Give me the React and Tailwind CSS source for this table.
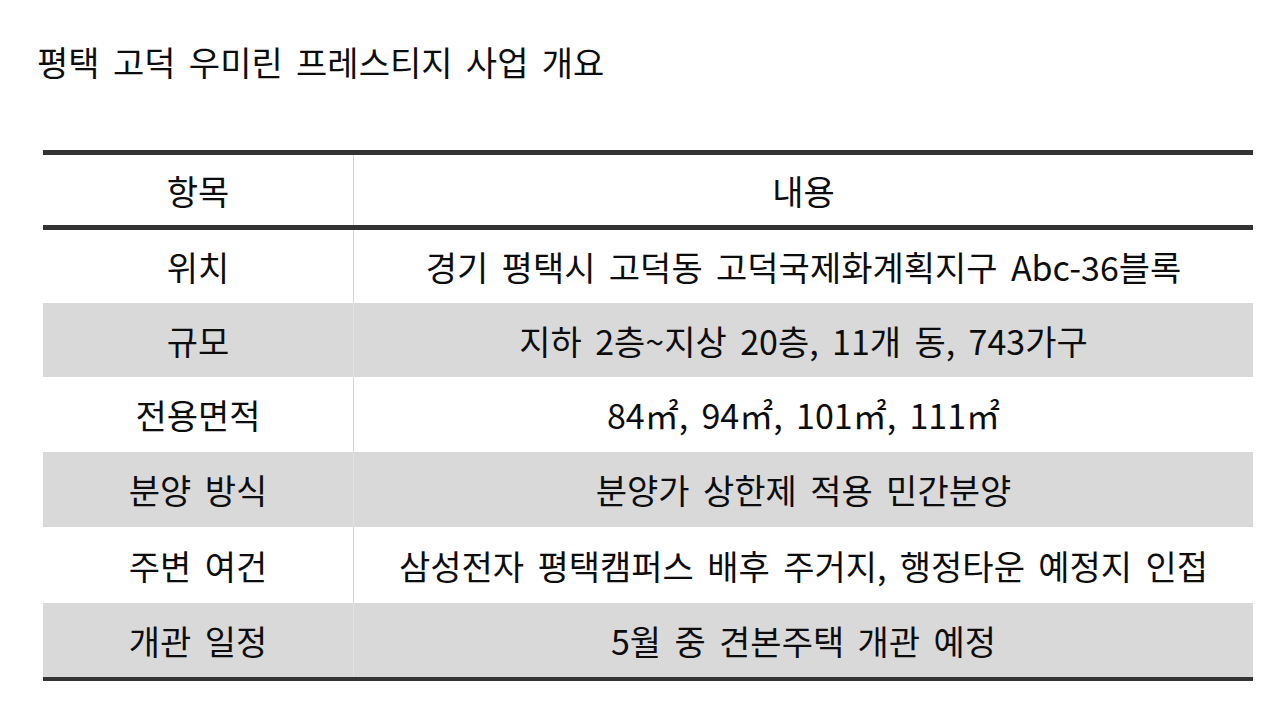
const rows = [
  { label: '위치', value: '경기 평택시 고덕동 고덕국제화계획지구 Abc-36블록', h: 'h-[73px]', gray: false },
  { label: '규모', value: '지하 2층~지상 20층, 11개 동, 743가구', h: 'h-[74px]', gray: true },
  { label: '전용면적', value: '84㎡, 94㎡, 101㎡, 111㎡', h: 'h-[75px]', gray: false },
  { label: '분양 방식', value: '분양가 상한제 적용 민간분양', h: 'h-[75px]', gray: true },
  { label: '주변 여건', value: '삼성전자 평택캠퍼스 배후 주거지, 행정타운 예정지 인접', h: 'h-[76px]', gray: false },
  { label: '개관 일정', value: '5월 중 견본주택 개관 예정', h: 'h-[74px]', gray: true },
];

const App = () => {
  return (
    <div
      className="min-h-[710px] w-[1280px] bg-white text-[#0d0d0d] [word-spacing:0.36em]"
      style={{ fontFamily: '"Noto Sans CJK KR", "Noto Sans", sans-serif' }}
    >
      <h1 className="pl-[37px] pt-[38px] text-[34px] font-normal leading-[48px]">
        평택 고덕 우미린 프레스티지 사업 개요
      </h1>

      <div className="mt-[64px] ml-[43px] w-[1210px] border-t-[5px] border-b-[4px] border-[#333333]">
        <div className="grid h-[75px] grid-cols-[311px_1fr] border-b-[5px] border-[#333333] text-[34px]">
          <div className="flex items-center justify-center border-r border-[#d4d4d4]">항목</div>
          <div className="flex items-center justify-center">내용</div>
        </div>
        {rows.map((row) => (
          <div
            key={row.label}
            className={`grid grid-cols-[311px_1fr] text-[34px] ${row.h} ${row.gray ? 'bg-[#d9d9d9]' : 'bg-white'}`}
          >
            <div className={`flex items-center justify-center border-r ${row.gray ? 'border-[#e2e2e2]' : 'border-[#d4d4d4]'}`}>
              {row.label}
            </div>
            <div className="flex items-center justify-center">{row.value}</div>
          </div>
        ))}
      </div>
    </div>
  );
};

export default App;
